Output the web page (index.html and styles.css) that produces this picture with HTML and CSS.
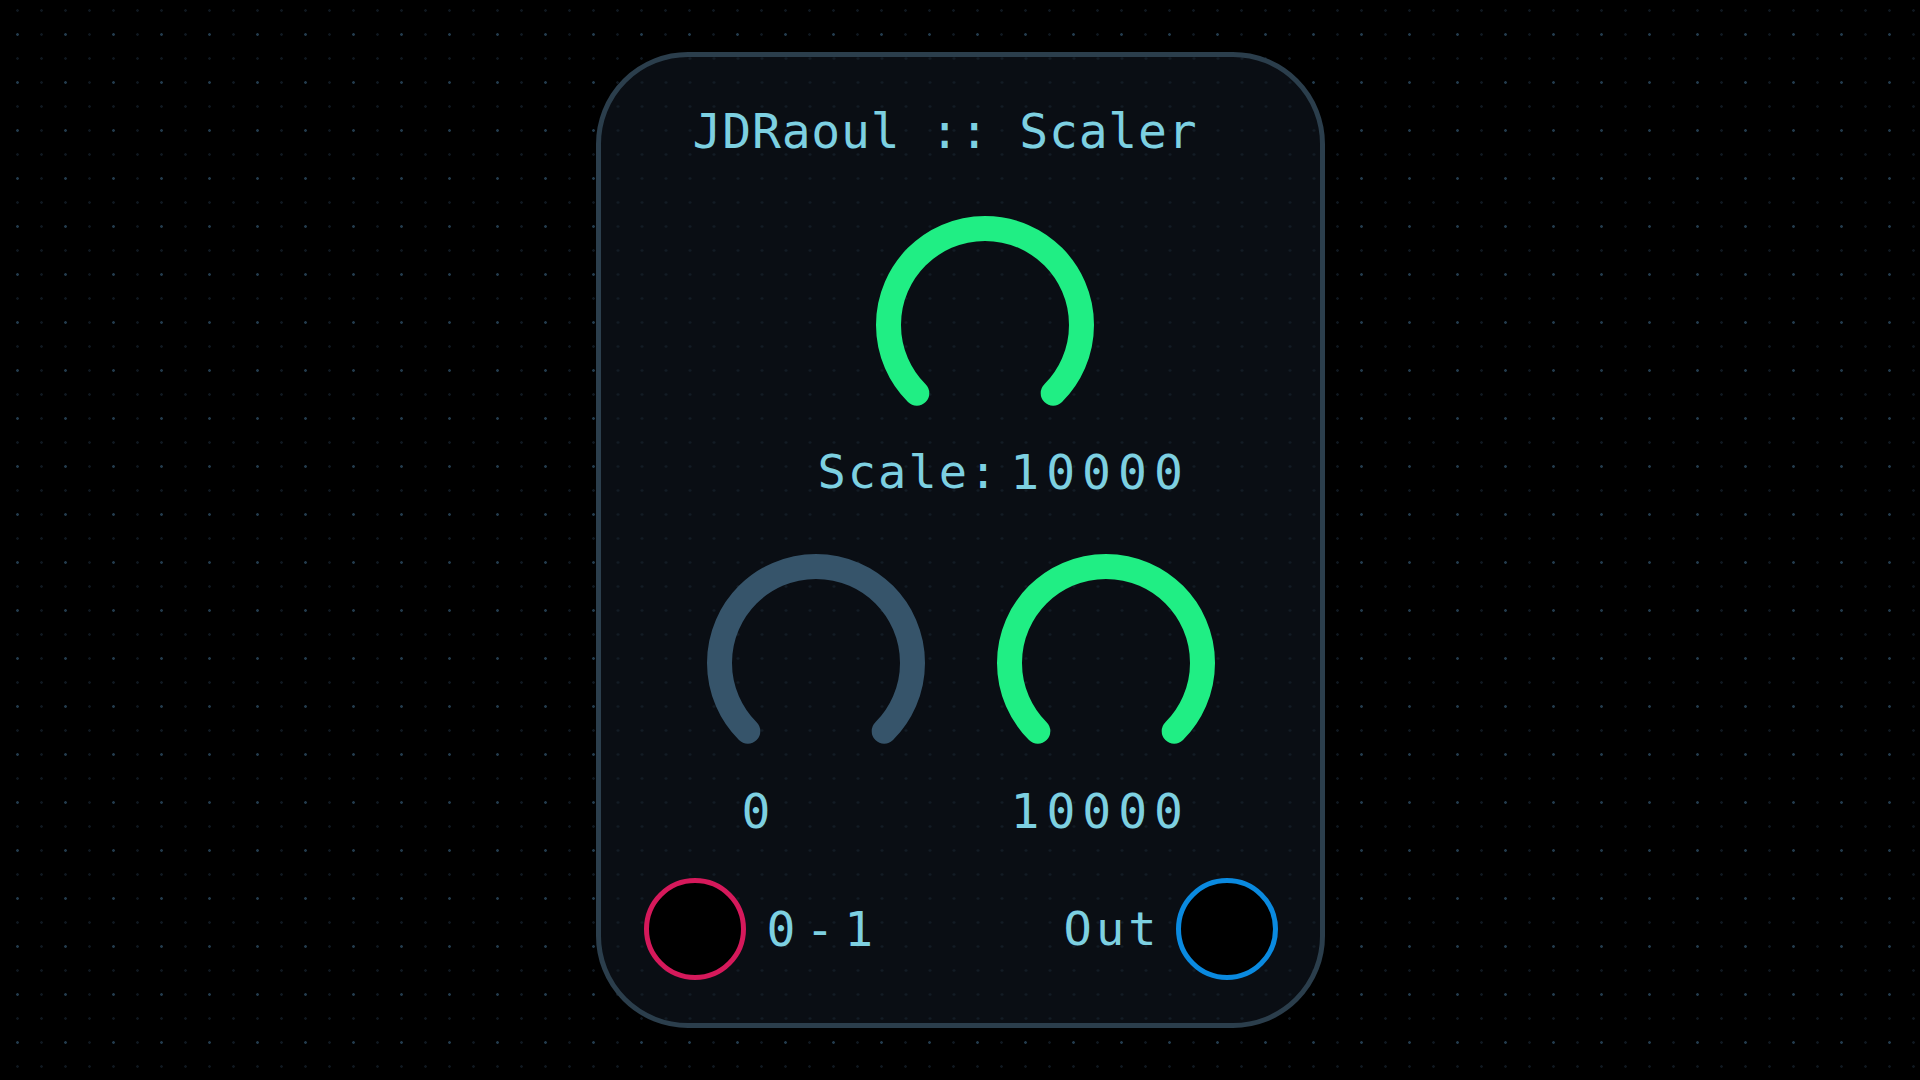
FILE: index.html
```html
<!DOCTYPE html>
<html lang="en">
<head>
<meta charset="utf-8">
<title>JDRaoul :: Scaler</title>
<link rel="stylesheet" href="styles.css">
</head>
<body>
<div class="module">
  <div class="title">JDRaoul :: Scaler</div>

  <div class="main-knob">
    <svg class="knob" width="220" height="220" viewBox="0 0 220 220">
      <path d="M41.8 178.2 A96.5 96.5 0 1 1 178.2 178.2" class="arc arc-on"/>
    </svg>
  </div>

  <div class="scale-row">
    <span class="scale-label">Scale:</span>
    <span class="value">10000</span>
  </div>

  <div class="knob-row">
    <svg class="knob" width="220" height="220" viewBox="0 0 220 220">
      <path d="M41.8 178.2 A96.5 96.5 0 1 1 178.2 178.2" class="arc arc-off"/>
    </svg>
    <svg class="knob" width="220" height="220" viewBox="0 0 220 220">
      <path d="M41.8 178.2 A96.5 96.5 0 1 1 178.2 178.2" class="arc arc-on"/>
    </svg>
  </div>

  <div class="value-row">
    <span class="value min">0</span>
    <span class="value">10000</span>
  </div>

  <div class="port-row">
    <div class="port-group">
      <span class="port port-in"></span>
      <span class="value port-label-in">0-1</span>
    </div>
    <div class="port-group">
      <span class="port-label-out">Out</span>
      <span class="port port-out"></span>
    </div>
  </div>
</div>
</body>
</html>
```

FILE: styles.css
```css
html, body {
  margin: 0;
  padding: 0;
  width: 1920px;
  height: 1080px;
  overflow: hidden;
}

body {
  background:
    radial-gradient(circle at 1.5px 1.5px, #223a4c 1px, transparent 1.6px) 16px 33px / 48px 48px,
    radial-gradient(circle at 1.5px 1.5px, #0f171f 1px, transparent 1.6px) 16px 9px / 24px 24px,
    #000;
  display: flex;
  align-items: center;
  justify-content: center;
  font-family: "DejaVu Sans Mono", "Liberation Mono", monospace;
  color: #7dd0e1;
}

.module {
  box-sizing: border-box;
  width: 729px;
  height: 976px;
  border: 5px solid #2b3e4c;
  border-radius: 92px;
  background:
    radial-gradient(circle at 1.5px 1.5px, #131c25 1px, transparent 1.6px) 16px 9px / 24px 24px fixed,
    #0a0e14;
  display: flex;
  flex-direction: column;
  padding-top: 46px;
}

.title {
  font-size: 48px;
  line-height: 56px;
  letter-spacing: 0.8px;
  text-align: center;
  padding-right: 30px;
  white-space: nowrap;
}

.main-knob {
  margin-top: 56px;
  display: flex;
  justify-content: center;
  padding-left: 49px;
}

.knob {
  display: block;
}

.arc {
  fill: none;
  stroke-width: 25;
  stroke-linecap: round;
}

.arc-on {
  stroke: #20ee84;
}

.arc-off {
  stroke: #36546a;
}

.scale-row {
  margin-top: 9px;
  display: flex;
  gap: 11px;
  padding-left: 217px;
  font-size: 47px;
  line-height: 56px;
}

.scale-label {
  letter-spacing: 2px;
}

.value {
  font-size: 48px;
  line-height: 56px;
  letter-spacing: 7px;
}

.knob-row {
  margin-top: 53px;
  display: flex;
  gap: 70px;
  padding-left: 105px;
}

.value-row {
  margin-top: 10px;
  display: flex;
  padding-left: 141px;
}

.value-row .min {
  width: 269px;
}

.port-row {
  margin-top: 39px;
  display: flex;
  justify-content: space-between;
  align-items: center;
  padding: 0 42px 0 43px;
}

.port-group {
  display: flex;
  align-items: center;
}

.port {
  box-sizing: border-box;
  width: 102px;
  height: 102px;
  border-radius: 50%;
  background: #000;
  border: 5px solid;
}

.port-in {
  border-color: #d6195b;
  margin-right: 21px;
}

.port-label-in {
  letter-spacing: 10px;
}

.port-out {
  border-color: #0a8ae0;
  margin-left: 15px;
}

.port-label-out {
  font-size: 47px;
  line-height: 56px;
  letter-spacing: 4px;
}
```
